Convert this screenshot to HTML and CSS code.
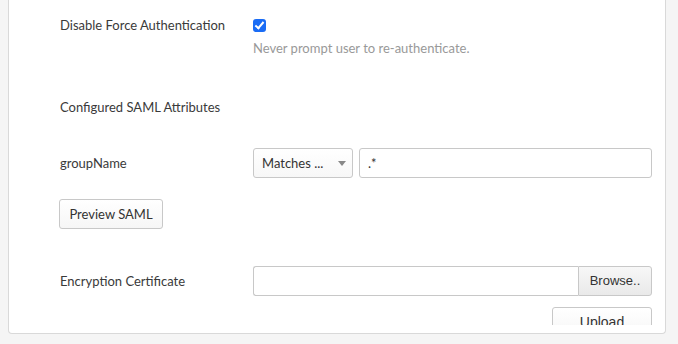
FILE: index.html
```html
<!DOCTYPE html>
<html lang="en">
<head>
    <meta charset="UTF-8">
    <title>SAML Settings</title>
    <link rel="stylesheet" href="styles.css">
</head>
<body>
    <div class="panel">
        <div class="panel-body">
            <div class="field field-first">
                <div class="field-label">Disable Force Authentication</div>
                <div class="field-control">
                    <input type="checkbox" class="check" checked>
                </div>
            </div>
            <div class="field">
                <div class="field-label"></div>
                <div class="field-control help">Never prompt user to re-authenticate.</div>
            </div>

            <div class="section-title">Configured SAML Attributes</div>

            <div class="field field-attr">
                <div class="field-label">groupName</div>
                <div class="field-control attr-controls">
                    <div class="select-wrap">
                        <select class="select">
                            <option>Matches ...</option>
                        </select>
                    </div>
                    <input type="text" class="text-input" value=".*">
                </div>
            </div>

            <button class="btn btn-preview">Preview SAML</button>

            <div class="field field-cert">
                <div class="field-label">Encryption Certificate</div>
                <div class="field-control file-group">
                    <input type="text" class="text-input file-name">
                    <button class="btn btn-browse">Browse..</button>
                </div>
            </div>

            <div class="upload-row">
                <button class="btn btn-upload">Upload</button>
            </div>
        </div>
    </div>
</body>
</html>
```

FILE: styles.css
```css
body {
    margin: 0;
    background-color: #f5f5f5;
    font-family: Lato, "Liberation Sans", Arial, sans-serif;
    font-size: 13px;
    color: #3a3a3a;
}

.panel {
    margin-left: 8px;
    width: 656px;
    background-color: #fff;
    border: 1px solid #d9d9d9;
    border-top: 0;
    border-radius: 0 0 4px 4px;
    padding-bottom: 8px;
}

.panel-body {
    height: 325px;
    overflow: hidden;
    padding: 0 13px 0 51px;
    box-sizing: border-box;
}

.field {
    display: flex;
    align-items: center;
    line-height: 18px;
}

.field-label {
    width: 193px;
    flex-shrink: 0;
}

.field-control {
    flex: 1;
}

.field-first {
    padding-top: 16px;
}

.check {
    appearance: none;
    -webkit-appearance: none;
    display: block;
    width: 13px;
    height: 13px;
    margin: 0;
    border-radius: 3px;
    background-color: #1a6cf5;
    position: relative;
}

.check:checked::after {
    content: "";
    position: absolute;
    left: 4px;
    top: 1px;
    width: 3px;
    height: 7px;
    border: solid #fff;
    border-width: 0 2px 2px 0;
    transform: rotate(40deg);
}

.help {
    margin-top: 5px;
    color: #999;
}

.section-title {
    margin-top: 41px;
    line-height: 18px;
}

.field-attr {
    margin-top: 32px;
}

.attr-controls {
    display: flex;
    gap: 6px;
}

.select-wrap {
    position: relative;
    width: 100px;
}

.select-wrap::after {
    content: "";
    position: absolute;
    right: 7px;
    top: 13px;
    border-left: 4px solid transparent;
    border-right: 4px solid transparent;
    border-top: 5px solid #888;
}

.select {
    appearance: none;
    -webkit-appearance: none;
    width: 100%;
    height: 30px;
    padding: 0 8px;
    font: inherit;
    color: #333;
    border: 1px solid #c8c8c8;
    border-radius: 3px;
    background: linear-gradient(#fff, #f7f7f7);
}

.text-input {
    flex: 1;
    height: 30px;
    box-sizing: border-box;
    padding: 0 8px;
    font: inherit;
    color: #333;
    border: 1px solid #c8c8c8;
    border-radius: 3px;
    background-color: #fff;
}

.btn {
    height: 30px;
    padding: 0 8px;
    font: inherit;
    color: #333;
    white-space: nowrap;
    border: 1px solid #c8c8c8;
    border-radius: 3px;
    background: linear-gradient(#fff, #f6f6f6);
}

.btn-preview {
    display: block;
    margin-top: 21px;
    margin-left: -1px;
    width: 104px;
}

.field-cert {
    margin-top: 37px;
}

.file-group {
    display: flex;
}

.file-name {
    border-radius: 3px 0 0 3px;
    border-right: 0;
}

.btn-browse {
    width: 74px;
    border-radius: 0 3px 3px 0;
    background: linear-gradient(#f7f7f7, #e9e9e9);
    font-family: "Liberation Sans", Arial, sans-serif;
}

.upload-row {
    display: flex;
    justify-content: flex-end;
    margin-top: 11px;
}

.btn-upload {
    width: 100px;
    font-family: "Liberation Sans", Arial, sans-serif;
    font-size: 14px;
}
```
